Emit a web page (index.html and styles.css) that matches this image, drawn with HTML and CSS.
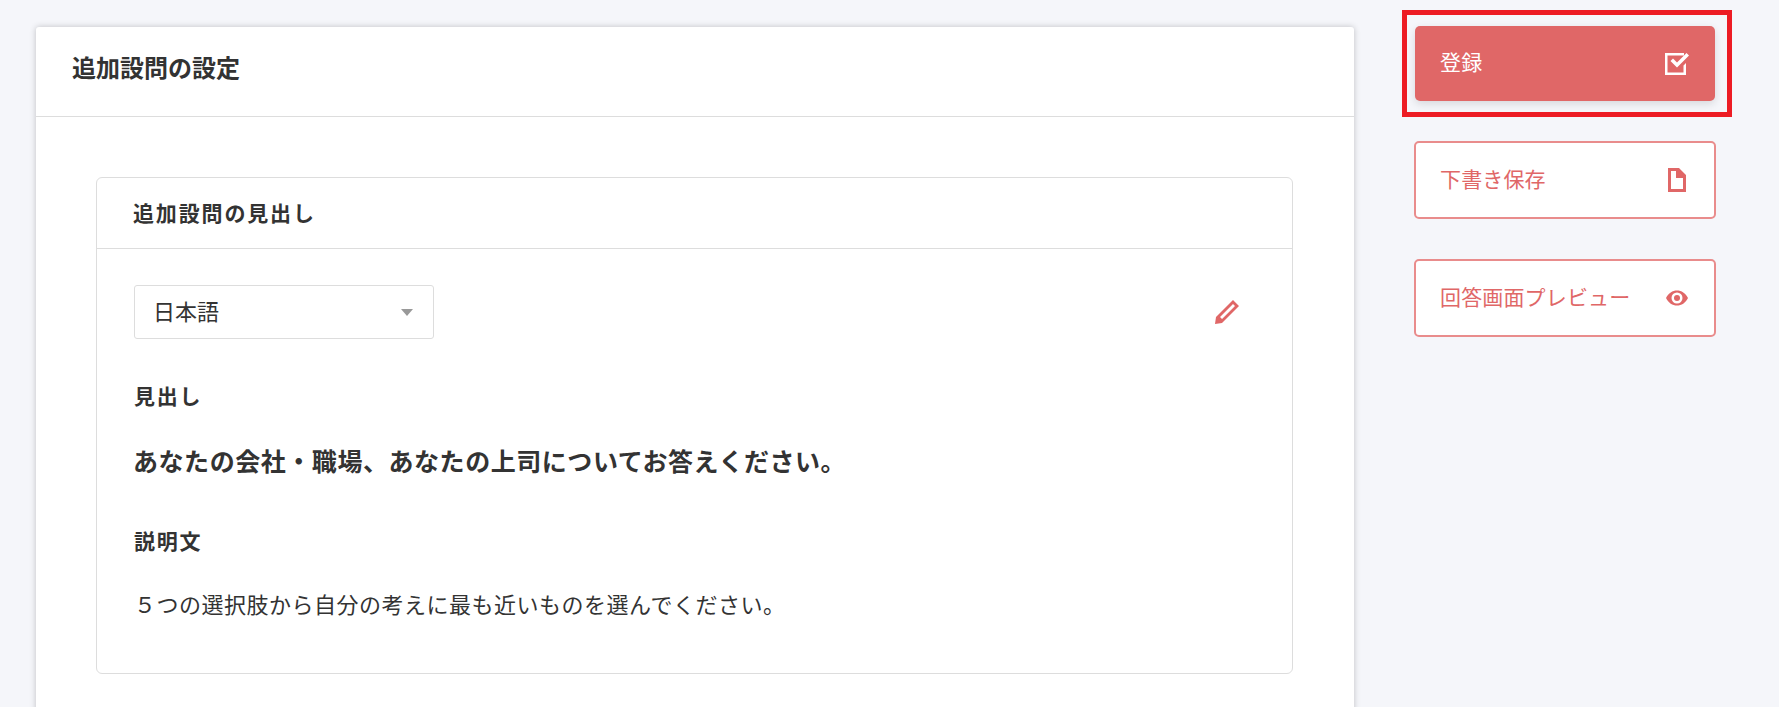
FILE: index.html
```html
<!DOCTYPE html>
<html lang="ja">
<head>
  <meta charset="UTF-8" />
  <meta name="viewport" content="width=device-width, initial-scale=1.0" />
  <title>追加設問の設定</title>
  <link rel="stylesheet" href="styles.css">
</head>
<body>
  <div class="page">
    <main class="card">
      <h1 class="card-title">追加設問の設定</h1>

      <div class="card-body">
        <section class="panel">
          <h2 class="panel-title">追加設問の見出し</h2>

          <div class="panel-body">
            <div class="lang-row">
              <div class="select">
                <span class="select-text">日本語</span>
                <span class="select-arrow"></span>
              </div>
              <svg class="edit-icon" viewBox="0 0 24 24" aria-hidden="true">
                <path fill-rule="evenodd" d="M18 0l6 6L7 23 0 24l1-7zM18 4L5 17l2 2L20 6z" />
              </svg>
            </div>

            <div class="label first-label">見出し</div>
            <div class="heading-text">あなたの会社・職場、あなたの上司についてお答えください。</div>

            <div class="label second-label">説明文</div>
            <div class="desc-text">５つの選択肢から自分の考えに最も近いものを選んでください。</div>
          </div>
        </section>
      </div>
    </main>

    <aside class="side">
      <button class="btn btn-primary">
        <span class="btn-text">登録</span>
        <svg class="btn-icon" viewBox="0 0 24 24" aria-hidden="true">
          <path d="M0 1h19v2.500H2.500v17h16v-7l2.500-2.500V23H0z" />
          <path d="M21.500 1l2.500 2.500L12 15.500 5.500 9 8 6.500l4 4z" />
        </svg>
      </button>
      <button class="btn btn-outline">
        <span class="btn-text">下書き保存</span>
        <svg class="btn-icon" viewBox="0 0 24 24" aria-hidden="true">
          <path fill-rule="evenodd" d="M3 0h11l7 7v17H3zM6 3v18h12V10h-7V3z" />
          <path d="M14 2.500v4.500h4.500z" />
        </svg>
      </button>
      <button class="btn btn-outline">
        <span class="btn-text">回答画面プレビュー</span>
        <svg class="btn-icon" viewBox="0 0 24 24" aria-hidden="true">
          <path fill-rule="evenodd" d="M1 12c2.500-5 6.500-7.500 11-7.500S20.500 7 23 12c-2.500 5-6.500 7.500-11 7.500S3.500 17 1 12zm11 5.500a5.500 5.500 0 1 0 0-11 5.500 5.500 0 0 0 0 11z" />
          <circle cx="12" cy="12" r="3" />
        </svg>
      </button>
    </aside>
  </div>

  <div class="highlight"></div>
</body>
</html>
```

FILE: styles.css
```css
* {
  box-sizing: border-box;
}

html,
body {
  height: 100%;
}

body {
  margin: 0;
  overflow: hidden;
  background: #f5f6fa;
  color: #333;
  font-family: "Noto Sans CJK JP", "Noto Sans", sans-serif;
}

.page {
  display: flex;
  align-items: flex-start;
  padding: 27px 0 0 36px;
}

.card {
  width: 1318px;
  flex-shrink: 0;
  border-radius: 3px 3px 0 0;
  background: #fff;
  box-shadow: 0 0 6px rgba(0, 0, 0, 0.22);
}

.card-title {
  height: 90px;
  margin: 0;
  padding-left: 36px;
  border-bottom: 1px solid #ddd;
  font-size: 24px;
  font-weight: 700;
  line-height: 80px;
}

.card-body {
  padding: 60px 61px 60px 60px;
}

.panel {
  border: 1px solid #ddd;
  border-radius: 6px;
}

.panel-title {
  height: 71px;
  margin: 0;
  padding-left: 36px;
  border-bottom: 1px solid #ddd;
  font-size: 21px;
  font-weight: 700;
  letter-spacing: 1.85px;
  line-height: 68px;
}

.panel-body {
  padding: 36px 37px 50px;
}

.lang-row {
  display: flex;
  align-items: center;
  justify-content: space-between;
  padding-right: 16px;
}

.select {
  display: flex;
  align-items: center;
  justify-content: space-between;
  width: 300px;
  height: 54px;
  padding: 0 20px 0 18px;
  border: 1px solid #ddd;
  border-radius: 3px;
  font-size: 22px;
}

.select-text {
  padding-bottom: 4px;
}

.select-arrow {
  width: 0;
  height: 0;
  border-left: 6px solid transparent;
  border-right: 6px solid transparent;
  border-top: 7px solid #999;
}

.edit-icon {
  width: 24px;
  height: 24px;
  fill: #e06767;
}

.label {
  font-size: 21px;
  font-weight: 700;
  letter-spacing: 1.75px;
  line-height: 30px;
}

.first-label {
  margin-top: 41px;
}

.second-label {
  margin-top: 45px;
}

.heading-text {
  margin: 30px 0 0 -1px;
  font-size: 25px;
  font-weight: 700;
  letter-spacing: 0.55px;
  line-height: 40px;
}

.desc-text {
  margin-top: 28px;
  font-size: 22px;
  letter-spacing: 0.5px;
  line-height: 40px;
}

.side {
  display: flex;
  flex-direction: column;
  gap: 40px;
  width: 302px;
  margin-left: 60px;
}

.btn {
  display: flex;
  align-items: center;
  justify-content: space-between;
  width: 100%;
  height: 78px;
  padding: 0 25px 0 24px;
  border: 2px solid #e98c8c;
  border-radius: 5px;
  background: #fff;
  color: #e06767;
  font-family: inherit;
  font-size: 21px;
  letter-spacing: 0.15px;
  cursor: pointer;
}

.btn-text {
  padding-bottom: 4px;
}

.btn-primary {
  width: 300px;
  height: 75px;
  margin: -1px 0 0 1px;
  border: none;
  padding: 0 26px 0 25px;
  background: #e06767;
  color: #fff;
  box-shadow: 0 3px 8px rgba(0, 0, 0, 0.12);
}

.btn-primary .btn-text {
  padding-bottom: 6px;
}

.btn-icon {
  width: 24px;
  height: 24px;
  fill: currentColor;
  flex-shrink: 0;
}

.highlight {
  position: absolute;
  left: 1402px;
  top: 10px;
  width: 330px;
  height: 107px;
  border: 5px solid #ed1c24;
}
```
